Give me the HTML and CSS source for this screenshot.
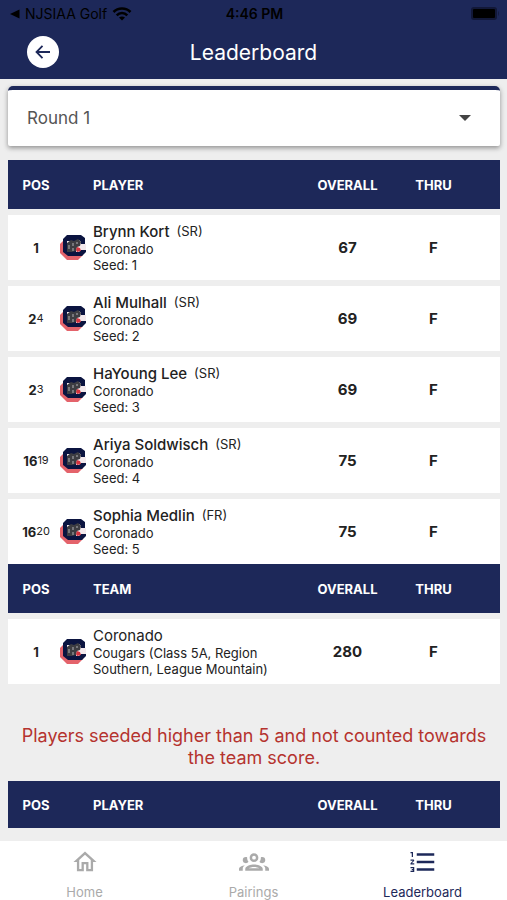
FILE: index.html
```html
<!DOCTYPE html>
<html lang="en">
<head>
    <meta charset="UTF-8">
    <meta name="viewport" content="width=device-width, initial-scale=1.0">
    <title>Leaderboard</title>
    <link rel="stylesheet" href="styles.css">
</head>
<body>
    <svg class="defs" aria-hidden="true">
        <symbol id="team-logo" viewBox="0 0 26 26">
            <path fill="#e4636b" d="M4 5L0 9v9l7 7h11l5-5z"/>
            <path fill="#0b1440" d="M7 0h14l4 3v6h-3v5h4v3l-4 4H8l-5-4V4z"/>
            <path fill="#f3e9ec" d="M19 5l2 2v2h5v6h-5l-2 2h-3V5zM7 6h4v2H7z"/>
            <path fill="#3d3d42" d="M7 8l4-3 3 1 4-2 3 3-1 4-3 1-1 4-4 1H7z"/>
            <path fill="#77777c" d="M8 10h2v4H8zM12 8h2v3h-2zM12 13h2v3h-2zM16 7h2v2h-2z"/>
            <path fill="#d5333f" d="M17 12l3 1 1 3-4 1-1-2z"/>
        </symbol>
    </svg>

    <header class="header">
        <div class="status-bar">
            <span class="status-left">
                <svg width="10" height="10" viewBox="0 0 10 10"><path d="M0 5l9.500-4.500v9z"/></svg>
                NJSIAA Golf
                <svg class="wifi" width="20" height="14" viewBox="0 0 20 14" fill="none" stroke="#000" stroke-width="2.600">
                    <path d="M1.500 5C6 .4 14 .4 18.500 5M4.700 8.300c3-3 7.600-3 10.600 0"/>
                    <path fill="#000" stroke="none" d="M10 13.500L7 10.500c1.600-1.500 4.400-1.500 6 0z"/>
                </svg>
            </span>
            <span class="status-time">4:46 PM</span>
            <svg class="battery" width="28" height="13" viewBox="0 0 28 13">
                <rect x="0" y="0" width="26" height="13" rx="3" fill="#121838"/>
                <rect x="2" y="2" width="22" height="9" rx="1"/>
                <path fill="#121838" d="M27 4c1 1 1 4 0 5z"/>
            </svg>
        </div>
        <div class="title-bar">
            <button class="back" type="button" aria-label="Back">
                <svg width="20" height="20" viewBox="0 0 20 20" fill="none" stroke="#1d2859" stroke-width="1.800">
                    <path d="M17 10H4M9.500 3.800L3.500 10l6 6.200"/>
                </svg>
            </button>
            <h1>Leaderboard</h1>
        </div>
    </header>

    <main class="content">
        <div class="round-card">
            <select class="round-select" aria-label="Round">
                <option>Round 1</option>
            </select>
            <svg class="caret" width="12" height="6" viewBox="0 0 12 6"><path fill="#444" d="M0 0h12L6 6z"/></svg>
        </div>

        <table class="board">
            <colgroup><col class="col-pos"><col class="col-logo"><col><col class="col-overall"><col class="col-thru"></colgroup>
            <thead>
                <tr><th class="pos">POS</th><td></td><th class="name">PLAYER</th><th>OVERALL</th><th class="thru">THRU</th></tr>
            </thead>
            <tbody>
                <tr>
                    <td class="pos">1</td>
                    <td class="logo"><svg><use href="#team-logo"/></svg></td>
                    <td class="name"><p class="player">Brynn Kort <span class="grade">(SR)</span></p><p>Coronado</p><p>Seed: 1</p></td>
                    <td class="score">67</td>
                    <td class="score thru">F</td>
                </tr>
                <tr>
                    <td class="pos">2<span class="tie">4</span></td>
                    <td class="logo"><svg><use href="#team-logo"/></svg></td>
                    <td class="name"><p class="player">Ali Mulhall <span class="grade">(SR)</span></p><p>Coronado</p><p>Seed: 2</p></td>
                    <td class="score">69</td>
                    <td class="score thru">F</td>
                </tr>
                <tr>
                    <td class="pos">2<span class="tie">3</span></td>
                    <td class="logo"><svg><use href="#team-logo"/></svg></td>
                    <td class="name"><p class="player">HaYoung Lee <span class="grade">(SR)</span></p><p>Coronado</p><p>Seed: 3</p></td>
                    <td class="score">69</td>
                    <td class="score thru">F</td>
                </tr>
                <tr>
                    <td class="pos">16<span class="tie">19</span></td>
                    <td class="logo"><svg><use href="#team-logo"/></svg></td>
                    <td class="name"><p class="player">Ariya Soldwisch <span class="grade">(SR)</span></p><p>Coronado</p><p>Seed: 4</p></td>
                    <td class="score">75</td>
                    <td class="score thru">F</td>
                </tr>
                <tr>
                    <td class="pos">16<span class="tie">20</span></td>
                    <td class="logo"><svg><use href="#team-logo"/></svg></td>
                    <td class="name"><p class="player">Sophia Medlin <span class="grade">(FR)</span></p><p>Coronado</p><p>Seed: 5</p></td>
                    <td class="score">75</td>
                    <td class="score thru">F</td>
                </tr>
            </tbody>
        </table>

        <table class="board">
            <colgroup><col class="col-pos"><col class="col-logo"><col><col class="col-overall"><col class="col-thru"></colgroup>
            <thead>
                <tr><th class="pos">POS</th><td></td><th class="name">TEAM</th><th>OVERALL</th><th class="thru">THRU</th></tr>
            </thead>
            <tbody>
                <tr>
                    <td class="pos">1</td>
                    <td class="logo"><svg><use href="#team-logo"/></svg></td>
                    <td class="name"><p class="team">Coronado</p><p>Cougars (Class 5A, Region Southern, League Mountain)</p></td>
                    <td class="score">280</td>
                    <td class="score thru">F</td>
                </tr>
            </tbody>
        </table>

        <p class="notice">Players seeded higher than 5 and not counted towards the team score.</p>

        <table class="board board-empty">
            <colgroup><col class="col-pos"><col class="col-logo"><col><col class="col-overall"><col class="col-thru"></colgroup>
            <thead>
                <tr><th class="pos">POS</th><td></td><th class="name">PLAYER</th><th>OVERALL</th><th class="thru">THRU</th></tr>
            </thead>
        </table>
    </main>

    <nav class="tabs">
        <a href="#home">
            <svg viewBox="-1 -1 26 26"><path d="M12 5.690l5 4.500V18h-2v-6H9v6H7v-7.810l5-4.500M12 3L2 12h3v8h6v-6h2v6h6v-8h3z"/></svg>
            Home
        </a>
        <a href="#pairings">
            <svg viewBox="0 0 24 24"><path d="M12,5A3.5,3.5 0 0,0 8.5,8.5A3.5,3.5 0 0,0 12,12A3.5,3.5 0 0,0 15.5,8.5A3.5,3.5 0 0,0 12,5M12,7A1.5,1.5 0 0,1 13.5,8.5A1.5,1.5 0 0,1 12,10A1.5,1.5 0 0,1 10.5,8.5A1.5,1.5 0 0,1 12,7M5.5,8A2.5,2.5 0 0,0 3,10.5C3,11.44 3.53,12.25 4.29,12.68C4.65,12.88 5.06,13 5.5,13C5.94,13 6.35,12.88 6.71,12.68C7.08,12.47 7.39,12.17 7.62,11.81C6.89,10.86 6.5,9.7 6.5,8.5C6.5,8.41 6.5,8.31 6.5,8.22C6.2,8.08 5.86,8 5.5,8M18.5,8C18.14,8 17.8,8.08 17.5,8.22C17.5,8.31 17.5,8.41 17.5,8.5C17.5,9.7 17.11,10.86 16.38,11.81C16.5,12 16.63,12.15 16.78,12.3C16.94,12.45 17.1,12.58 17.29,12.68C17.65,12.88 18.06,13 18.5,13C18.94,13 19.35,12.88 19.71,12.68C20.47,12.25 21,11.44 21,10.5A2.5,2.5 0 0,0 18.5,8M12,14C9.66,14 5,15.17 5,17.5V19H19V17.5C19,15.17 14.34,14 12,14M4.71,14.55C2.78,14.78 0,15.76 0,17.5V19H3V17.07C3,16.06 3.69,15.22 4.71,14.55M19.29,14.55C20.31,15.22 21,16.06 21,17.07V19H24V17.5C24,15.76 21.22,14.78 19.29,14.55M12,16C13.53,16 15.24,16.5 16.23,17H7.77C8.76,16.5 10.47,16 12,16Z"/></svg>
            Pairings
        </a>
        <a href="#leaderboard" class="active" aria-current="page">
            <svg viewBox="0 0 24 24"><path d="M7,13V11H21V13H7M7,19V17H21V19H7M7,7V5H21V7H7M3,8V5H2V4H4V8H3M2,17V16H5V20H2V19H4V18.5H3V17.5H4V17H2M4.25,10A0.75,0.75 0 0,1 5,10.75C5,10.95 4.92,11.14 4.79,11.27L3.12,13H5V14H2V13.08L4,11H2V10H4.25Z"/></svg>
            Leaderboard
        </a>
    </nav>
</body>
</html>
```
FILE: styles.css
```css
* {
    box-sizing: border-box;
}

body {
    margin: 0;
    min-height: 100vh;
    display: flex;
    flex-direction: column;
    font-family: Inter, Roboto, sans-serif;
    background: #eeeeee;
    color: #222;
}

h1, p {
    margin: 0;
}

.defs {
    display: none;
}

/* header */
.header {
    height: 79px;
    background: #1d2859;
}

.status-bar {
    display: grid;
    grid-template-columns: 1fr auto 1fr;
    align-items: center;
    height: 27px;
    padding: 0 8px 0 10px;
    font-size: 14px;
    color: #000;
}

.status-left {
    display: flex;
    align-items: center;
    gap: 5px;
}

.status-time {
    font-weight: 600;
}

.battery {
    justify-self: end;
}

.title-bar {
    display: grid;
    grid-template-columns: 32px 1fr 32px;
    align-items: center;
    height: 50px;
    padding: 0 27px;
}

.title-bar h1 {
    font-size: 21px;
    font-weight: 400;
    text-align: center;
    color: #fff;
}

.back {
    display: flex;
    align-items: center;
    justify-content: center;
    width: 32px;
    height: 32px;
    padding: 0;
    border: none;
    border-radius: 50%;
    background: #fff;
    cursor: pointer;
}

/* content */
.content {
    flex: 1;
    padding: 7px 7px 13px 8px;
}

.round-card {
    display: grid;
    align-items: center;
    height: 60px;
    margin-bottom: 14px;
    border-top: 4px solid #1d2859;
    border-radius: 5px 5px 2px 2px;
    background: #fff;
    box-shadow: 0 2px 5px rgba(0, 0, 0, 0.4);
}

.round-select {
    grid-area: 1 / 1;
    height: 56px;
    width: 100%;
    padding: 0 19px;
    border: none;
    background: none;
    appearance: none;
    font-family: inherit;
    font-size: 17px;
    color: #555;
}

.caret {
    grid-area: 1 / 1;
    justify-self: end;
    margin-right: 29px;
    pointer-events: none;
}

.board {
    width: 100%;
    table-layout: fixed;
    border-spacing: 0;
    text-align: center;
}

.col-pos {
    width: 52px;
}

.col-logo {
    width: 33px;
}

.col-overall {
    width: 87px;
}

.col-thru {
    width: 109px;
}

.board th,
.board td {
    padding: 0;
}

.board thead tr {
    height: 49px;
    background: #1d2859;
    color: #fff;
    font-size: 13px;
}

.board-empty thead tr {
    height: 47px;
}

.board tbody tr {
    height: 71px;
    background: #fff;
}

.board tbody td {
    border-top: 6px solid #eeeeee;
}

.board .pos {
    padding-left: 4px;
    white-space: nowrap;
}

.board td.pos {
    font-size: 13px;
    font-weight: 700;
}

.board .thru {
    padding-right: 24px;
}

.board .name {
    text-align: left;
}

.tie {
    font-size: 11px;
    font-weight: 400;
    line-height: 1;
    vertical-align: 2px;
}

.logo {
    text-align: left;
}

.logo svg {
    display: block;
    width: 26px;
    height: 26px;
}

.name p {
    font-size: 13px;
    line-height: 16px;
}

.name .player,
.name .team {
    font-size: 15px;
    line-height: 18px;
}

.name .player {
    font-weight: 500;
}

.grade {
    margin-left: 3px;
    font-size: 13px;
    font-weight: 400;
    line-height: 1;
    vertical-align: 1px;
}

.score {
    font-size: 15px;
    font-weight: 700;
}

.notice {
    margin: 41px 8px 12px;
    font-size: 18px;
    line-height: 22px;
    text-align: center;
    color: #b5332e;
}

/* bottom tabs */
.tabs {
    display: grid;
    grid-template-columns: repeat(3, 1fr);
    height: 59px;
    background: #fff;
}

.tabs a {
    display: flex;
    flex-direction: column;
    align-items: center;
    gap: 7px;
    padding-top: 6px;
    font-size: 13px;
    line-height: 16px;
    text-decoration: none;
    color: #aaa;
}

.tabs svg {
    width: 30px;
    height: 30px;
    fill: currentColor;
}

.tabs .active {
    color: #1d2859;
}
```
